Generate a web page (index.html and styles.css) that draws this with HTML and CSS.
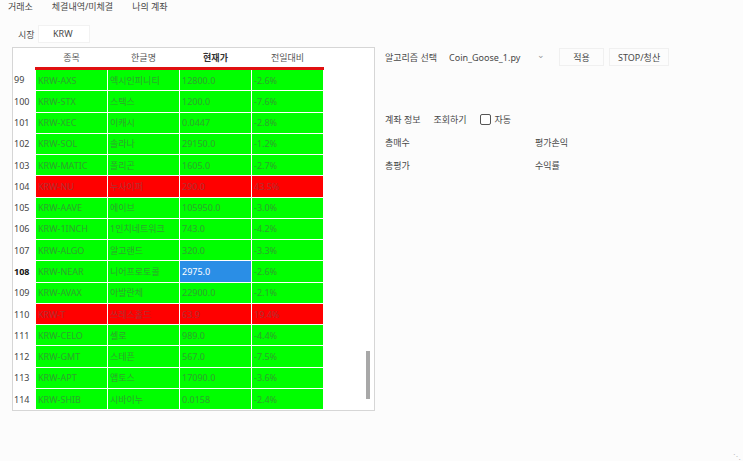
FILE: index.html
```html
<!DOCTYPE html>
<html lang="ko">
<head>
    <meta charset="UTF-8">
    <title>Coin Goose</title>
    <link rel="stylesheet" href="styles.css">
</head>
<body>

    <div class="menubar">
        <span>거래소</span>
        <span>체결내역/미체결</span>
        <span>나의 계좌</span>
    </div>

    <div class="main">
        <div class="left">
            <div class="market">
                <span class="label">시장</span>
                <span class="combo">KRW</span>
            </div>

            <div class="frame">
                <table>
                    <thead>
                        <tr>
                            <th class="idx"></th>
                            <th>종목</th>
                            <th>한글명</th>
                            <th class="strong">현재가</th>
                            <th>전일대비</th>
                            <th class="rest"></th>
                        </tr>
                    </thead>
                    <tbody id="lista"></tbody>
                </table>
                <div class="scrollbar"></div>
            </div>
        </div>

        <div class="right">
            <div class="algo">
                <span>알고리즘 선택</span>
                <span class="algo-combo">Coin_Goose_1.py <span class="chev">&#8964;</span></span>
                <button class="btn apply">적용</button>
                <button class="btn">STOP/청산</button>
            </div>

            <div class="account">
                <span>계좌 정보</span>
                <span>조회하기</span>
                <label class="check"><span class="box"></span>자동</label>
            </div>

            <div class="summary">
                <span>총매수</span>
                <span>평가손익</span>
                <span>총평가</span>
                <span>수익률</span>
            </div>
        </div>
    </div>

    <div class="grip">&#8945;</div>

    <script>
        let moedas = [
            [99, "KRW-AXS", "엑시인피니티", "12800.0", "-2.6%", "g"],
            [100, "KRW-STX", "스택스", "1200.0", "-7.6%", "g"],
            [101, "KRW-XEC", "이캐시", "0.0447", "-2.8%", "g"],
            [102, "KRW-SOL", "솔라나", "29150.0", "-1.2%", "g"],
            [103, "KRW-MATIC", "폴리곤", "1605.0", "-2.7%", "g"],
            [104, "KRW-NU", "누사이퍼", "290.0", "43.5%", "r"],
            [105, "KRW-AAVE", "에이브", "105950.0", "-3.0%", "g"],
            [106, "KRW-1INCH", "1인치네트워크", "743.0", "-4.2%", "g"],
            [107, "KRW-ALGO", "알고랜드", "320.0", "-3.3%", "g"],
            [108, "KRW-NEAR", "니어프로토콜", "2975.0", "-2.6%", "s"],
            [109, "KRW-AVAX", "아발란체", "22900.0", "-2.1%", "g"],
            [110, "KRW-T", "쓰레스홀드", "63.9", "19.4%", "r"],
            [111, "KRW-CELO", "셀로", "989.0", "-4.4%", "g"],
            [112, "KRW-GMT", "스테픈", "567.0", "-7.5%", "g"],
            [113, "KRW-APT", "앱토스", "17090.0", "-3.6%", "g"],
            [114, "KRW-SHIB", "시바이누", "0.0158", "-2.4%", "g"]
        ];

        let tabela = document.getElementById("lista");

        moedas.forEach((m, i) => {
            let linha = tabela.insertRow();
            let cor = m[5] === "r" ? "red" : "green";
            if (i === 0) linha.className = "first";
            linha.innerHTML = `
                <td class="idx ${m[5] === "s" ? "bold" : ""}">${m[0]}</td>
                <td class="${cor}">${m[1]}</td>
                <td class="${cor}">${m[2]}</td>
                <td class="${m[5] === "s" ? "sel" : cor}">${m[3]}</td>
                <td class="${cor}">${m[4]}</td>
                <td class="rest"></td>
            `;
        });
    </script>

</body>
</html>
```

FILE: styles.css
```css
body {
    margin: 0;
    background: #fcfcfc;
    font-family: "Noto Sans", "Noto Sans CJK KR", sans-serif;
    font-size: 9px;
    color: #484848;
    height: 461px;
    position: relative;
    overflow: hidden;
}
.menubar {
    display: flex;
    gap: 19px;
    padding: 0 8px;
    height: 16px;
    line-height: 14px;
}
.main {
    display: flex;
}
.left {
    width: 375px;
    flex: none;
}
.market {
    display: flex;
    align-items: center;
    height: 18px;
    margin-top: 9px;
    padding-left: 18px;
}
.market .label {
    width: 20px;
}
.combo {
    width: 36px;
    height: 16px;
    line-height: 16px;
    padding-left: 14px;
    background: #fff;
    border: 1px solid #f2f2f2;
}
.frame {
    position: relative;
    margin: 4px 0 0 12px;
    width: 361px;
    height: 362px;
    border: 1px solid #d6d6d6;
    background: #fff;
    overflow: hidden;
}
table {
    border-collapse: collapse;
    table-layout: fixed;
}
th {
    height: 19px;
    font-weight: normal;
    padding: 0;
    text-align: center;
    color: #555;
}
th.strong {
    font-weight: bold;
    color: #333;
}
td {
    height: 20.27px;
    padding: 0 0 0 2px;
    border: 1px solid rgba(255, 255, 255, 0.75);
    white-space: nowrap;
    overflow: hidden;
}
tr.first td.green, tr.first td.red, tr.first td.sel {
    border-top: 3px solid #e01010;
}
.idx {
    width: 21px;
    border: none;
    background: #fff;
    color: #444;
    padding-left: 1px;
}
.idx.bold {
    font-weight: bold;
    color: #111;
}
th:nth-child(2), th:nth-child(3), th:nth-child(4), th:nth-child(5) {
    width: 72px;
}
.rest {
    width: 40px;
    border: none;
    background: #fff;
}
.green {
    background: #00ff00;
    color: #2fa32f;
}
.red {
    background: #ff0000;
    color: #b03030;
}
.sel {
    background: #2a8ee6;
    color: #fff;
}
.scrollbar {
    position: absolute;
    left: 353px;
    top: 303px;
    width: 4px;
    height: 48px;
    background: #a8a8a8;
}
.right {
    padding-left: 10px;
}
.algo {
    display: flex;
    align-items: center;
    margin-top: 31px;
    height: 20px;
}
.algo-combo {
    width: 100px;
    margin-left: 12px;
    padding-left: 0;
    display: flex;
    justify-content: space-between;
}
.chev {
    color: #999;
    line-height: 8px;
    padding-right: 4px;
}
.btn {
    font: inherit;
    color: #484848;
    background: #fcfcfc;
    border: 1px solid #f0f0f0;
    height: 18px;
    padding: 0 8px;
}
.apply {
    width: 45px;
    margin-left: 10px;
}
.btn + .btn {
    margin-left: 5px;
}
.account {
    display: flex;
    align-items: center;
    gap: 13px;
    margin-top: 43px;
    height: 18px;
}
.check {
    display: flex;
    align-items: center;
    gap: 4px;
}
.box {
    width: 9px;
    height: 9px;
    border: 1px solid #555;
    border-radius: 2px;
    background: #fff;
}
.summary {
    display: grid;
    grid-template-columns: 150px 60px;
    row-gap: 9px;
    margin-top: 8px;
    line-height: 14px;
}
.grip {
    position: absolute;
    right: 2px;
    bottom: 0;
    font-size: 8px;
    color: #bbb;
}
```
